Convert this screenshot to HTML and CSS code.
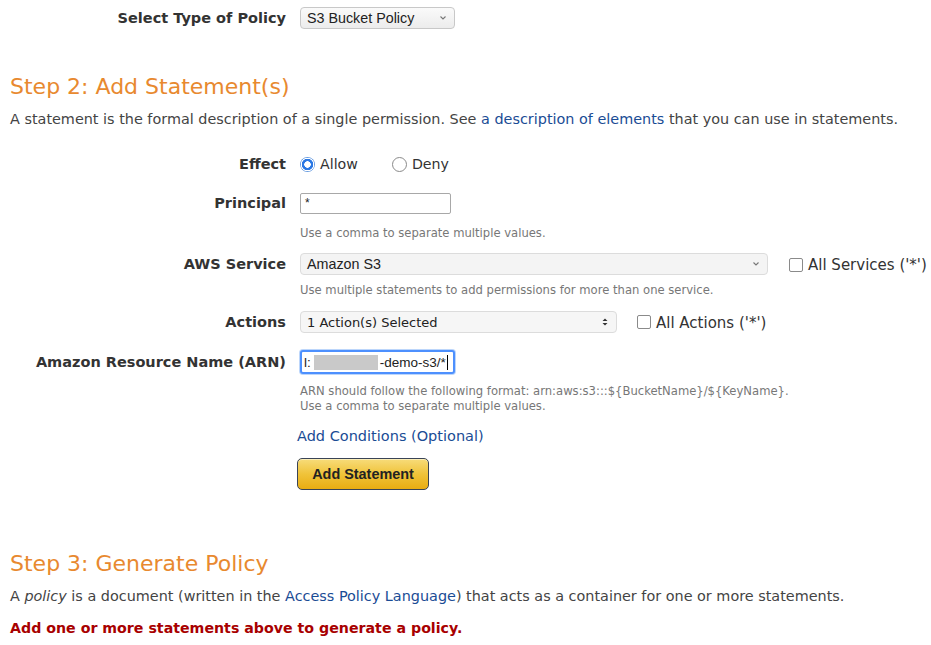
FILE: index.html
```html
<!DOCTYPE html>
<html>
<head>
<meta charset="utf-8">
<link rel="stylesheet" href="styles.css">
</head>
<body>
<div class="page">
  <div class="row row-type">
    <div class="label">Select Type of Policy</div>
    <div class="ctrl">
      <div class="select select-type"><span>S3 Bucket Policy</span><svg class="chev" width="8" height="6" viewBox="0 0 8 6"><path d="M1.5 1.5 L4 4 L6.5 1.5" fill="none" stroke="#777" stroke-width="1.1"/></svg></div>
    </div>
  </div>

  <h2 class="step step2">Step 2: Add Statement(s)</h2>
  <p class="intro">A statement is the formal description of a single permission. See <a href="#">a description of elements</a> that you can use in statements.</p>

  <div class="row row-effect">
    <div class="label">Effect</div>
    <div class="ctrl radios">
      <span class="radio on"></span><span class="rtext">Allow</span>
      <span class="radio"></span><span class="rtext">Deny</span>
    </div>
  </div>

  <div class="row row-principal">
    <div class="label">Principal</div>
    <div class="ctrl">
      <div class="input input-principal">*</div>
      <div class="hint hint-principal">Use a comma to separate multiple values.</div>
    </div>
  </div>

  <div class="row row-service">
    <div class="label">AWS Service</div>
    <div class="ctrl">
      <div class="inline">
        <div class="select select-service"><span>Amazon S3</span><svg class="chev" width="8" height="6" viewBox="0 0 8 6"><path d="M1.5 1.5 L4 4 L6.5 1.5" fill="none" stroke="#777" stroke-width="1.1"/></svg></div>
        <span class="check"></span><span class="ctext">All Services ('*')</span>
      </div>
      <div class="hint hint-service">Use multiple statements to add permissions for more than one service.</div>
    </div>
  </div>

  <div class="row row-actions">
    <div class="label">Actions</div>
    <div class="ctrl">
      <div class="inline">
        <div class="select select-actions"><span>1 Action(s) Selected</span><svg class="updown" width="8" height="10" viewBox="0 0 8 10"><path d="M1.5 4 L4 1.5 L6.5 4 Z M1.5 6 L4 8.5 L6.5 6 Z" fill="#333"/></svg></div>
        <span class="check"></span><span class="ctext">All Actions ('*')</span>
      </div>
    </div>
  </div>

  <div class="row row-arn">
    <div class="label">Amazon Resource Name (ARN)</div>
    <div class="ctrl">
      <div class="input input-arn"><span>l:</span><span class="blur"></span><span>-demo-s3/*</span><span class="caret"></span></div>
      <div class="hint hint-arn">ARN should follow the following format: arn:aws:s3:::${BucketName}/${KeyName}.<br>Use a comma to separate multiple values.</div>
      <a class="cond" href="#">Add Conditions (Optional)</a>
      <div class="btn-wrap"><button class="btn">Add Statement</button></div>
    </div>
  </div>

  <h2 class="step step3">Step 3: Generate Policy</h2>
  <p class="intro intro3">A <em>policy</em> is a document (written in the <a href="#">Access Policy Language</a>) that acts as a container for one or more statements.</p>
  <p class="warn">Add one or more statements above to generate a policy.</p>
</div>
</body>
</html>
```

FILE: styles.css
```css
* { box-sizing: border-box; }
html, body { margin: 0; padding: 0; background: #fff; }
body {
  font-family: "DejaVu Sans", Verdana, sans-serif;
  color: #444;
  font-size: 14.4px;
}
.page { padding: 0 0 0 10px; }

.row {
  display: grid;
  grid-template-columns: 276px 1fr;
  column-gap: 14px;
  align-items: start;
}
.label {
  text-align: right;
  font-weight: bold;
  font-size: 14.5px;
  color: #333;
  line-height: 22px;
  white-space: nowrap;
}
.ctrl { min-width: 0; }

.row-type { margin-top: 7px; }

.select {
  display: flex;
  align-items: center;
  justify-content: space-between;
  height: 22px;
  border: 1px solid #c8c8c8;
  border-radius: 4px;
  background: linear-gradient(#fafafa, #ececec);
  font-family: "Liberation Sans", Arial, sans-serif;
  font-size: 14.3px;
  color: #222;
  padding: 0 7px 0 6px;
}
.select-type { width: 155px; }
.select-service { width: 468px; background: #f4f4f4; border-color: #dcdcdc; }
.select-actions { width: 317px; background: #f6f6f6; border-color: #dcdcdc; font-family: "DejaVu Sans", Verdana, sans-serif; font-size: 13px; }
.chev, .updown { flex: none; }

.page h2.step {
  font-weight: normal;
  font-size: 22px;
  color: #e8892f;
  margin: 0;
  line-height: 28px;
}
.page h2.step2 { margin-top: 44px; }
.intro { margin: 8px 0 0; line-height: 20px; color: #444; }
a { color: #1a4c95; text-decoration: none; }

.row-effect { margin-top: 24px; }
.radios { display: flex; align-items: center; height: 22px; }
.radio {
  width: 15px; height: 15px; border-radius: 50%;
  border: 1px solid #8a8a8a; background: #fff; flex: none;
  margin-right: 5px;
}
.radio.on {
  border: none;
  background: radial-gradient(circle, #fff 0 3px, #2b78e4 3.5px 5.5px, #fff 6px 6.5px, #6a9de0 7px);
}
.rtext { margin-right: 34px; color: #333; font-size: 14.2px; }

.row-principal { margin-top: 17px; }
.input {
  height: 21px;
  border: 1px solid #a8a8a8;
  border-radius: 2px;
  background: #fff;
  font-family: "Liberation Sans", Arial, sans-serif;
  font-size: 12px;
  color: #222;
  padding: 1px 4px;
  line-height: 17px;
}
.input-principal { width: 151px; margin-top: 1px; }
.hint {
  font-size: 11.6px;
  color: #777;
  line-height: 15px;
  margin-top: 9px;
}
.hint-principal { margin-top: 12px; }

.row-service { margin-top: 12px; }
.inline { display: flex; align-items: center; }
.check {
  width: 14px; height: 14px; border: 1px solid #8a8a8a; border-radius: 2px;
  background: #fff; flex: none; margin-right: 5px;
}
.select-service + .check { margin-left: 21px; margin-top: 2px; }
.select-actions + .check { margin-left: 20px; }
.ctext { color: #333; white-space: nowrap; font-size: 15px; line-height: 18px; margin-top: 2px; }
.hint-service { margin-top: 8px; }

.row-actions { margin-top: 13px; }

.row-arn { margin-top: 17px; }
.row-arn .label { line-height: 24px; }
.input-arn {
  width: 155px;
  height: 24px;
  border: 2px solid #4d90fe;
  border-radius: 3px;
  box-shadow: 0 0 0 1px #bcd6fb;
  display: flex;
  align-items: center;
  padding: 0 2px;
  font-size: 13.5px;
}
.blur { display: inline-block; width: 64px; height: 15px; background: #c9c9c9; margin: 0 2px 0 3px; }
.caret { display: inline-block; width: 1px; height: 15px; background: #000; margin-left: 1px; }
.hint-arn { margin-top: 10px; }
.cond { display: block; margin-top: 12px; margin-left: -3px; line-height: 20px; font-size: 14.5px; }
.btn-wrap { margin-top: 12px; margin-left: -3px; }
.btn {
  width: 132px; height: 32px;
  border: 1px solid #3a4456;
  border-radius: 5px;
  background: linear-gradient(#f7dc7a, #f0c33a 50%, #e9ad12);
  font-family: "Liberation Sans", Arial, sans-serif;
  font-weight: bold;
  font-size: 14.4px;
  color: #222;
  box-shadow: inset 0 1px 0 #fbeeb8;
  padding: 0;
}

.page h2.step3 { margin-top: 60px; }
.intro3 { margin-top: 8px; }
.warn {
  margin: 12px 0 0;
  color: #a80000;
  font-weight: bold;
  line-height: 20px;
  font-size: 14.2px;
}
```
